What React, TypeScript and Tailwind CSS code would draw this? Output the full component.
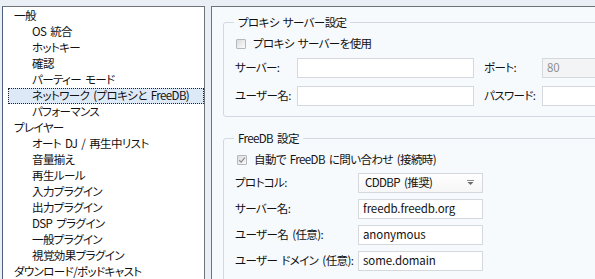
const treeItems: { label: string; level: 0 | 1; selected?: boolean }[] = [
  { label: '一般', level: 0 },
  { label: 'OS 統合', level: 1 },
  { label: 'ホットキー', level: 1 },
  { label: '確認', level: 1 },
  { label: 'パーティー モード', level: 1 },
  { label: 'ネットワーク (プロキシと FreeDB)', level: 1, selected: true },
  { label: 'パフォーマンス', level: 1 },
  { label: 'プレイヤー', level: 0 },
  { label: 'オート DJ / 再生中リスト', level: 1 },
  { label: '音量揃え', level: 1 },
  { label: '再生ルール', level: 1 },
  { label: '入力プラグイン', level: 1 },
  { label: '出力プラグイン', level: 1 },
  { label: 'DSP プラグイン', level: 1 },
  { label: '一般プラグイン', level: 1 },
  { label: '視覚効果プラグイン', level: 1 },
  { label: 'ダウンロード/ポッドキャスト', level: 0 },
];

function Checkbox({ checked }: { checked?: boolean }) {
  return (
    <span className="flex h-[10px] w-[10px] shrink-0 items-center justify-center rounded-[1px] border border-[#b4b9bf] bg-gradient-to-br from-[#dcdcdc] to-[#fbfbfb]">
      {checked && (
        <svg width="8" height="8" viewBox="0 0 8 8">
          <path d="M1.2 4.2 L3.2 6.1 L6.8 1.6" fill="none" stroke="#8c8c8c" strokeWidth="1.3" />
        </svg>
      )}
    </span>
  );
}

function Input({ value, disabled, className }: { value?: string; disabled?: boolean; className: string }) {
  return (
    <div
      className={`flex h-[20px] shrink-0 items-center border border-[#d5d9de] px-[4px] tracking-[-0.1px] ${
        disabled ? 'bg-[#f3f4f5] text-[#8f8f8f]' : 'bg-white text-[#111]'
      } ${className}`}
    >
      {value}
    </div>
  );
}

function GroupBox({ title, className, children }: { title: string; className: string; children: React.ReactNode }) {
  return (
    <div className={`relative w-[400px] rounded-[3px] border border-[#d3d9e0] ${className}`}>
      <span className="absolute left-[10px] top-[-9px] bg-[#f7fafd] px-[4px] leading-[16px]">{title}</span>
      {children}
    </div>
  );
}

export default function App() {
  return (
    <div className="flex h-[279px] w-[595px] gap-[6px] overflow-hidden whitespace-nowrap bg-[#eaeff5] pl-[2px] pt-[6px] text-[11.5px] tracking-[-0.6px] text-[#111] [font-family:'Noto_Sans_CJK_JP',sans-serif] [font-feature-settings:'palt'] [word-spacing:2px]">
      {/* tree */}
      <div className="w-[203px] shrink-0 border-l border-r border-t border-l-[#4e5f80] border-r-[#6e737a] border-t-[#6e737a] bg-white pt-[1px]">
        {treeItems.map((item) =>
          item.selected ? (
            <div key={item.label} className="flex h-[16px] items-center pl-[5px]">
              <div className="flex h-[16px] flex-1 items-center border border-dotted border-[#222] bg-[#dde9f7] pl-[23px] leading-none">
                {item.label}
              </div>
            </div>
          ) : (
            <div
              key={item.label}
              className={`flex h-[16px] items-center leading-none ${item.level === 0 ? 'pl-[11px]' : 'pl-[29px]'}`}
            >
              {item.label}
            </div>
          ),
        )}
      </div>

      {/* settings page */}
      <div className="flex-1 overflow-hidden border-l border-t border-[#6e737a] bg-[#f7fafd] pl-[11px] pt-[15px]">
        <GroupBox title="プロキシ サーバー設定" className="pb-[10px] pl-[11px] pt-[14px]">
          <div className="flex h-[14px] items-center gap-[7px] pl-[1px]">
            <Checkbox />
            <span>プロキシ サーバーを使用</span>
          </div>
          <div className="mt-[7px] flex items-center">
            <span className="w-[62px] shrink-0">サーバー:</span>
            <Input className="w-[177px]" />
            <span className="ml-[10px] w-[58px] shrink-0">ポート:</span>
            <Input className="w-[80px]" value="80" disabled />
          </div>
          <div className="mt-[8px] flex items-center">
            <span className="w-[62px] shrink-0">ユーザー名:</span>
            <Input className="w-[177px]" />
            <span className="ml-[10px] w-[58px] shrink-0">パスワード:</span>
            <Input className="w-[80px]" />
          </div>
        </GroupBox>

        <GroupBox title="FreeDB 設定" className="mt-[21px] pb-[10px] pl-[11px] pt-[14px]">
          <div className="flex h-[14px] items-center gap-[7px] pl-[2px]">
            <Checkbox checked />
            <span>自動で FreeDB に問い合わせ (接続時)</span>
          </div>
          <div className="mt-[6px] flex items-center">
            <span className="w-[123px] shrink-0">プロトコル:</span>
            <div className="flex h-[20px] w-[125px] shrink-0 items-center justify-between border border-[#d5d9de] bg-gradient-to-b from-white to-[#f6f6f6] pl-[6px] pr-[8px]">
              <span>CDDBP (推奨)</span>
              <svg width="7" height="6" viewBox="0 0 7 6">
                <rect x="0" y="0" width="7" height="1" fill="#8a8a8a" />
                <path d="M0.5 2 L6.5 2 L3.5 5 Z" fill="#6a6a6a" />
              </svg>
            </div>
          </div>
          <div className="mt-[6px] flex items-center">
            <span className="w-[123px] shrink-0">サーバー名:</span>
            <Input className="w-[125px]" value="freedb.freedb.org" />
          </div>
          <div className="mt-[6px] flex items-center">
            <span className="w-[123px] shrink-0">ユーザー名 (任意):</span>
            <Input className="w-[125px]" value="anonymous" />
          </div>
          <div className="mt-[6px] flex items-center">
            <span className="w-[123px] shrink-0">ユーザー ドメイン (任意):</span>
            <Input className="w-[125px]" value="some.domain" />
          </div>
        </GroupBox>
      </div>
    </div>
  );
}
